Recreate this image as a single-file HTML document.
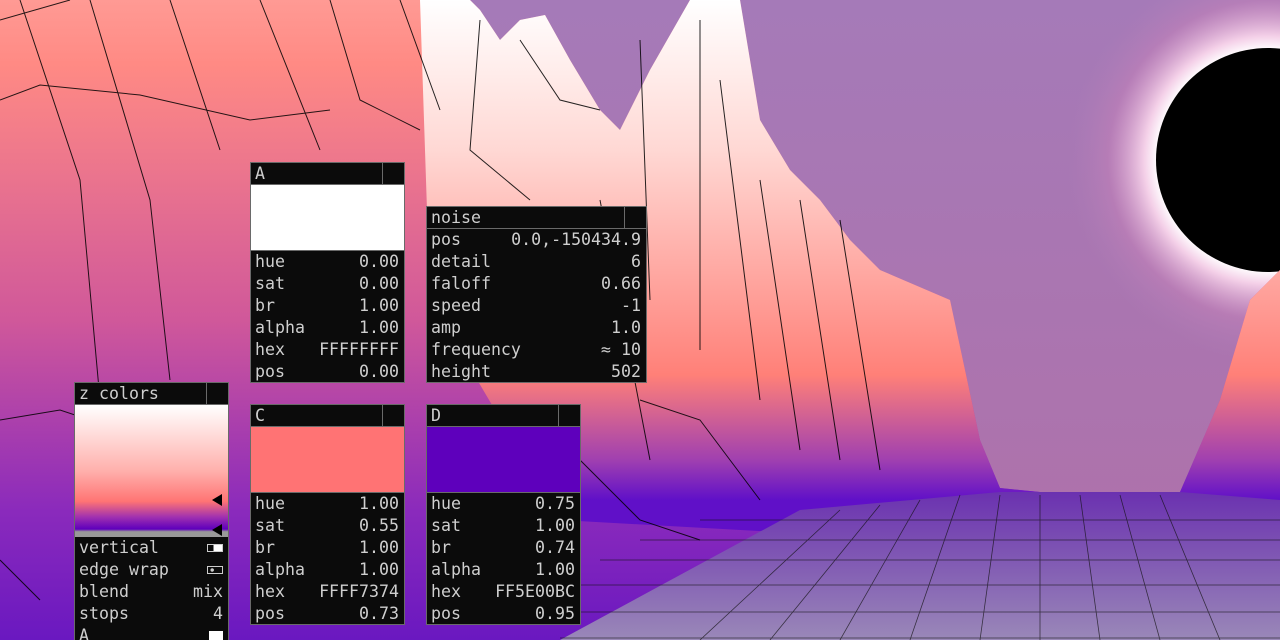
<!DOCTYPE html>
<html style="overflow:hidden;width:1280px;height:640px"><head><meta charset="utf-8"><style>
html,body{margin:0;width:1280px;height:640px;overflow:hidden}
body{position:relative;font-family:"DejaVu Sans Mono","Liberation Mono",monospace;}
svg.bg{position:absolute;left:0;top:0}
.p{position:absolute;background:#0b0b0b;border:1px solid #6a6a6a;color:#cfcfcf;font-size:16.6px;box-sizing:border-box;overflow:hidden}
.h{height:21px;line-height:21px;padding-left:4px;border-bottom:1px solid #6a6a6a;position:relative}
.h:after{content:"";position:absolute;right:21px;top:0;bottom:0;border-left:1px solid #6a6a6a}
.r{height:22px;line-height:22px;display:flex;justify-content:space-between;padding:0 5px 0 4px;white-space:pre}
.sw{height:65px;border-bottom:1px solid #6a6a6a}
</style></head><body>
<svg class="bg" width="1280" height="640">
<defs>
<linearGradient id="sky" x1="0" y1="0" x2="0" y2="1"><stop offset="0" stop-color="#a57ab8"/><stop offset="1" stop-color="#b070a8"/></linearGradient>
<radialGradient id="glow" cx="1268" cy="160" r="200" gradientUnits="userSpaceOnUse"><stop offset="0.55" stop-color="#fff"/><stop offset="0.62" stop-color="#f4d0e8"/><stop offset="0.8" stop-color="#c080b8" stop-opacity="0.6"/><stop offset="1" stop-color="#b080b8" stop-opacity="0"/></radialGradient>
<linearGradient id="mt" x1="0" y1="0" x2="0" y2="640" gradientUnits="userSpaceOnUse"><stop offset="0" stop-color="#ff9a94"/><stop offset="0.1" stop-color="#ff8a84"/><stop offset="0.5" stop-color="#d0589a"/><stop offset="0.8" stop-color="#8a2abc"/><stop offset="1" stop-color="#6a18c0"/></linearGradient>
<linearGradient id="mt2" x1="0" y1="0" x2="0" y2="500" gradientUnits="userSpaceOnUse"><stop offset="0" stop-color="#fff"/><stop offset="0.3" stop-color="#ffd8d4"/><stop offset="0.75" stop-color="#ff8078"/><stop offset="0.92" stop-color="#a040b0"/><stop offset="1" stop-color="#6010c8"/></linearGradient>
<linearGradient id="fl" x1="0" y1="490" x2="0" y2="640" gradientUnits="userSpaceOnUse"><stop offset="0" stop-color="#6a30b0"/><stop offset="1" stop-color="#9a88b8"/></linearGradient>
</defs>
<rect width="1280" height="640" fill="url(#sky)"/>
<circle cx="1268" cy="160" r="200" fill="url(#glow)"/>
<circle cx="1268" cy="160" r="112" fill="#000"/>
<path d="M0 0 L470 0 L480 10 L500 40 L520 20 L545 15 L570 60 L600 110 L620 130 L650 70 L690 0 L740 0 L760 120 L790 170 L820 200 L850 240 L880 270 L950 300 L980 440 L1000 488 L1040 492 L1180 492 L1220 400 L1250 300 L1280 270 L1280 640 L0 640 Z" fill="url(#mt)"/>
<path d="M420 0 L470 0 L480 10 L500 40 L520 20 L545 15 L570 60 L600 110 L620 130 L650 70 L690 0 L740 0 L760 120 L790 170 L820 200 L850 240 L880 270 L950 300 L980 440 L1000 488 L1040 492 L1180 492 L1220 400 L1250 300 L1280 270 L1280 560 L560 520 L430 300 Z" fill="url(#mt2)"/>
<path d="M560 640 L800 510 L1000 492 L1180 492 L1280 500 L1280 640 Z" fill="url(#fl)"/>
<g stroke="#000" stroke-width="1" fill="none" opacity="0.85">
<path d="M0 100 L40 85 L140 95 L250 120 L330 110 M0 420 L60 410 L120 430 L160 400 M0 20 L70 0 M20 0 L80 180 L100 400 M90 0 L150 200 L170 380 M170 0 L220 150 M260 0 L320 150 M330 0 L360 100 L420 130 M400 0 L440 110 M480 20 L470 150 L530 200 M520 40 L560 100 L600 110 M640 40 L650 300 M700 20 L700 350 M720 80 L760 400 M760 180 L800 450 M800 200 L840 460 M840 220 L880 470 M600 200 L650 460 M640 400 L700 420 L760 500 M0 560 L40 600 M580 460 L640 520 L700 540"/>
</g>
<g stroke="#111" stroke-width="0.8" opacity="0.7">
<path d="M700 520 L1280 520 M640 540 L1280 540 M600 560 L1280 560 M580 585 L1280 585 M560 612 L1280 612 M560 638 L1280 638 M1000 495 L980 640 M1040 495 L1040 640 M1080 495 L1100 640 M1120 495 L1160 640 M1160 495 L1220 640 M960 495 L910 640 M920 500 L840 640 M880 505 L770 640 M840 510 L700 640"/>
</g>
</svg>

<div class="p" style="left:250px;top:162px;width:155px;height:221px">
<div class="h">A</div><div class="sw" style="background:#fff"></div>
<div class="r"><span>hue</span><span>0.00</span></div><div class="r"><span>sat</span><span>0.00</span></div><div class="r"><span>br</span><span>1.00</span></div><div class="r"><span>alpha</span><span>1.00</span></div><div class="r"><span>hex</span><span>FFFFFFFF</span></div><div class="r"><span>pos</span><span>0.00</span></div>
</div>

<div class="p" style="left:426px;top:206px;width:221px;height:177px">
<div class="h">noise</div>
<div class="r"><span>pos</span><span>0.0,-150434.9</span></div><div class="r"><span>detail</span><span>6</span></div><div class="r"><span>faloff</span><span>0.66</span></div><div class="r"><span>speed</span><span>-1</span></div><div class="r"><span>amp</span><span>1.0</span></div><div class="r"><span>frequency</span><span>≈ 10</span></div><div class="r"><span>height</span><span>502</span></div>
</div>

<div class="p" style="left:74px;top:382px;width:155px;height:258px;border-bottom:none">
<div class="h">z colors</div>
<div style="height:132px;background:linear-gradient(#fff 0%,#ffb0ac 50%,#ff7474 73%,#a030b0 85%,#5e00bc 94%,#999 96%,#999 100%);position:relative">
<div style="position:absolute;right:6px;top:89px;border:6px solid transparent;border-right:10px solid #000;border-left:0"></div>
<div style="position:absolute;right:6px;top:119px;border:6px solid transparent;border-right:10px solid #000;border-left:0"></div>
</div>
<div class="r"><span>vertical</span><span style="display:inline-block;width:14px;height:6px;border:1px solid #ccc;margin-top:7px;background:linear-gradient(90deg,#0b0b0b 40%,#fff 40%)"></span></div>
<div class="r"><span>edge wrap</span><span style="display:inline-block;width:14px;height:6px;border:1px solid #ccc;margin-top:7px;background:radial-gradient(circle at 30% 50%,#ccc 1.5px,#0b0b0b 2px)"></span></div>
<div class="r"><span>blend</span><span>mix</span></div><div class="r"><span>stops</span><span>4</span></div>
<div class="r"><span>A</span><span style="display:inline-block;width:14px;height:14px;background:#fff;margin-top:6px"></span></div>
</div>

<div class="p" style="left:250px;top:404px;width:155px;height:221px">
<div class="h">C</div><div class="sw" style="background:#ff7374"></div>
<div class="r"><span>hue</span><span>1.00</span></div><div class="r"><span>sat</span><span>0.55</span></div><div class="r"><span>br</span><span>1.00</span></div><div class="r"><span>alpha</span><span>1.00</span></div><div class="r"><span>hex</span><span>FFFF7374</span></div><div class="r"><span>pos</span><span>0.73</span></div>
</div>

<div class="p" style="left:426px;top:404px;width:155px;height:221px">
<div class="h">D</div><div class="sw" style="background:#5e00bc"></div>
<div class="r"><span>hue</span><span>0.75</span></div><div class="r"><span>sat</span><span>1.00</span></div><div class="r"><span>br</span><span>0.74</span></div><div class="r"><span>alpha</span><span>1.00</span></div><div class="r"><span>hex</span><span>FF5E00BC</span></div><div class="r"><span>pos</span><span>0.95</span></div>
</div>
</body></html>
